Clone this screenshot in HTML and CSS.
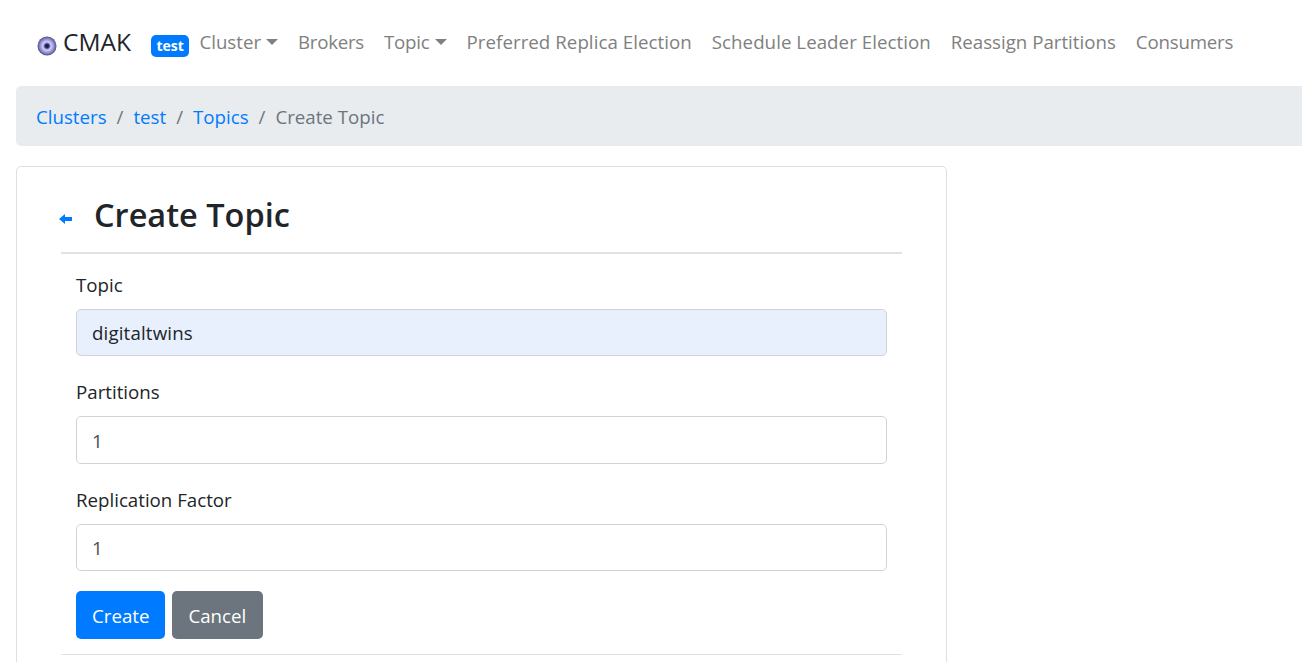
FILE: index.html
```html
<!DOCTYPE html>
<html lang="en">
<head>
<meta charset="utf-8">
<title>CMAK - Create Topic</title>
<link rel="stylesheet" href="styles.css">
</head>
<body>
<nav class="navbar">
  <a class="brand" href="#">
    <svg class="logo" width="20" height="20" viewBox="0 0 20 20"><defs><radialGradient id="eye"><stop offset="0" stop-color="#15153f"/><stop offset="0.2" stop-color="#2a2a70"/><stop offset="0.42" stop-color="#d5d3f4"/><stop offset="0.75" stop-color="#8f8ad0"/><stop offset="1" stop-color="#4d4a80"/></radialGradient></defs><circle cx="10" cy="10" r="9.5" fill="url(#eye)"/></svg>
    <span>CMAK</span>
  </a>
  <span class="badge">test</span>
  <ul class="nav-links">
    <li class="caret">Cluster</li>
    <li class="tight">Brokers</li>
    <li class="caret snug">Topic</li>
    <li class="loose">Preferred Replica Election</li>
    <li class="loose">Schedule Leader Election</li>
    <li>Reassign Partitions</li>
    <li class="snug">Consumers</li>
  </ul>
</nav>
<ol class="breadcrumb">
  <li><a href="#">Clusters</a></li>
  <li class="sep">/</li>
  <li><a href="#">test</a></li>
  <li class="sep">/</li>
  <li><a href="#">Topics</a></li>
  <li class="sep">/</li>
  <li class="current">Create Topic</li>
</ol>
<section class="card">
  <header class="card-head">
    <svg class="back" width="13" height="10" viewBox="0 0 13 10"><path d="M0 5 L6 0 V3 H13 V7 H6 V10 Z" fill="#007bff"/></svg>
    <h2>Create Topic</h2>
  </header>
  <form class="form">
    <div class="group">
      <label>Topic</label>
      <input class="input filled" type="text" value="digitaltwins">
    </div>
    <div class="group">
      <label>Partitions</label>
      <input class="input" type="text" value="1">
    </div>
    <div class="group">
      <label>Replication Factor</label>
      <input class="input" type="text" value="1">
    </div>
    <div class="buttons">
      <button class="btn primary" type="button">Create</button>
      <button class="btn secondary" type="button">Cancel</button>
    </div>
  </form>
  <hr class="rule">
</section>
</body>
</html>
```
FILE: styles.css
```css
* { box-sizing: border-box; }
html, body { margin: 0; height: 662px; overflow: hidden; }
body {
  padding-left: 16px;
  background: #fff;
  color: #212529;
  font-family: "Open Sans", "Noto Sans", sans-serif;
  font-size: 18.7px;
}
a { text-decoration: none; color: #007bff; }
.navbar {
  display: flex;
  align-items: center;
  height: 86px;
  padding: 0 0 4px 21px;
}
.brand {
  display: flex;
  align-items: center;
  gap: 6px;
  width: 94px;
  color: #212529;
  font-size: 24.5px;
}
.logo { margin-top: 9px; flex: none; }
.badge {
  margin-left: 20px;
  margin-top: 10px;
  background: #007bff;
  color: #fff;
  font-size: 14px;
  font-weight: 700;
  line-height: 22px;
  padding: 0 5.5px;
  border-radius: 5px;
}
.nav-links {
  display: flex;
  list-style: none;
  margin: 0 0 0 10px;
  padding: 0;
  gap: 20px;
  color: #808080;
}
.tight { letter-spacing: -0.28px; }
.snug { letter-spacing: -0.2px; }
.loose { letter-spacing: 0.05px; }
.caret::after {
  content: "";
  display: inline-block;
  margin-left: 5px;
  vertical-align: 4px;
  border-top: 6px solid #808080;
  border-left: 6px solid transparent;
  border-right: 6px solid transparent;
}
.breadcrumb {
  display: flex;
  list-style: none;
  align-items: center;
  gap: 10px;
  height: 60px;
  margin: 0 -20px 20px 0;
  padding: 0 20px;
  background: #e9ecef;
  border-radius: 5px;
}
.sep, .current { color: #6c757d; }
.card {
  width: 931px;
  height: 520px;
  padding: 0 44px;
  border: 1px solid #dfdfdf;
  border-radius: 5px;
}
.card-head {
  display: flex;
  align-items: center;
  height: 87px;
  padding-top: 10px;
  border-bottom: 2px solid #e2e2e2;
}
.back { margin-left: -2px; margin-top: 9px; flex: none; }
.card-head h2 {
  margin: 0 0 0 22px;
  font-size: 32.5px;
  font-weight: 600;
  line-height: 1.2;
}
.form { padding: 14.7px 15px 0; }
.group { margin-bottom: 20px; }
.group label { display: block; line-height: 32px; margin-bottom: 8px; }
.input {
  display: block;
  width: 100%;
  height: 47.5px;
  padding: 1px 15px 0;
  font: inherit;
  color: #495057;
  background: #fff;
  border: 1px solid #ced4da;
  border-radius: 5px;
}
.input.filled { background: #e8f0fe; color: #212529; letter-spacing: 0.15px; }
.buttons { display: flex; gap: 7px; }
.btn {
  height: 47.5px;
  padding: 2px 16px 0;
  font: inherit;
  color: #fff;
  border: 0;
  border-radius: 5px;
}
.secondary { padding: 2px 17px 0 16px; }
.primary { background: #007bff; }
.secondary { background: #6c757d; }
.rule { margin: 15px 0 0; border: 0; border-top: 1px solid #e2e2e2; }
```
